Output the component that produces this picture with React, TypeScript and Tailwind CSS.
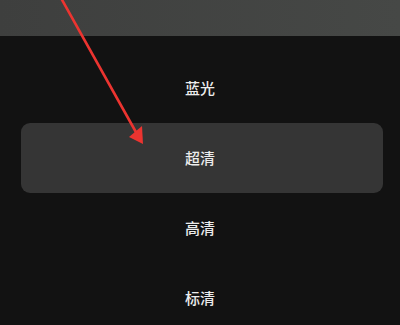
const options = ["蓝光", "超清", "高清", "标清"];
const selected = "超清";

export default function App() {
  return (
    <div
      className="relative h-[325px] w-[400px] overflow-hidden bg-[#121212]"
      style={{ fontFamily: '"Noto Sans CJK SC", "Noto Sans", sans-serif' }}
    >
      <div className="h-[36px] bg-gradient-to-r from-[#3e3f3e] to-[#464846]" />
      <div className="flex flex-col pt-[17px]">
        {options.map((label) => {
          const active = label === selected;
          return (
            <div
              key={label}
              className={
                active
                  ? "ml-[21px] mr-[17px] flex h-[70px] items-center justify-center rounded-[9px] bg-[#353535] pr-[4px]"
                  : "flex h-[70px] items-center justify-center"
              }
            >
              <span className="-mt-[2px] text-[15px] font-medium leading-none text-[#ececec]">{label}</span>
            </div>
          );
        })}
      </div>

      {/* red annotation arrow */}
      <svg
        className="pointer-events-none absolute left-0 top-0"
        width="400"
        height="325"
        viewBox="0 0 400 325"
      >
        <line x1="61" y1="-2" x2="137" y2="134" stroke="#ec3430" strokeWidth="2.6" strokeLinecap="round" />
        <polygon points="143,144 129,137 142,126" fill="#ec3430" />
      </svg>
    </div>
  );
}
